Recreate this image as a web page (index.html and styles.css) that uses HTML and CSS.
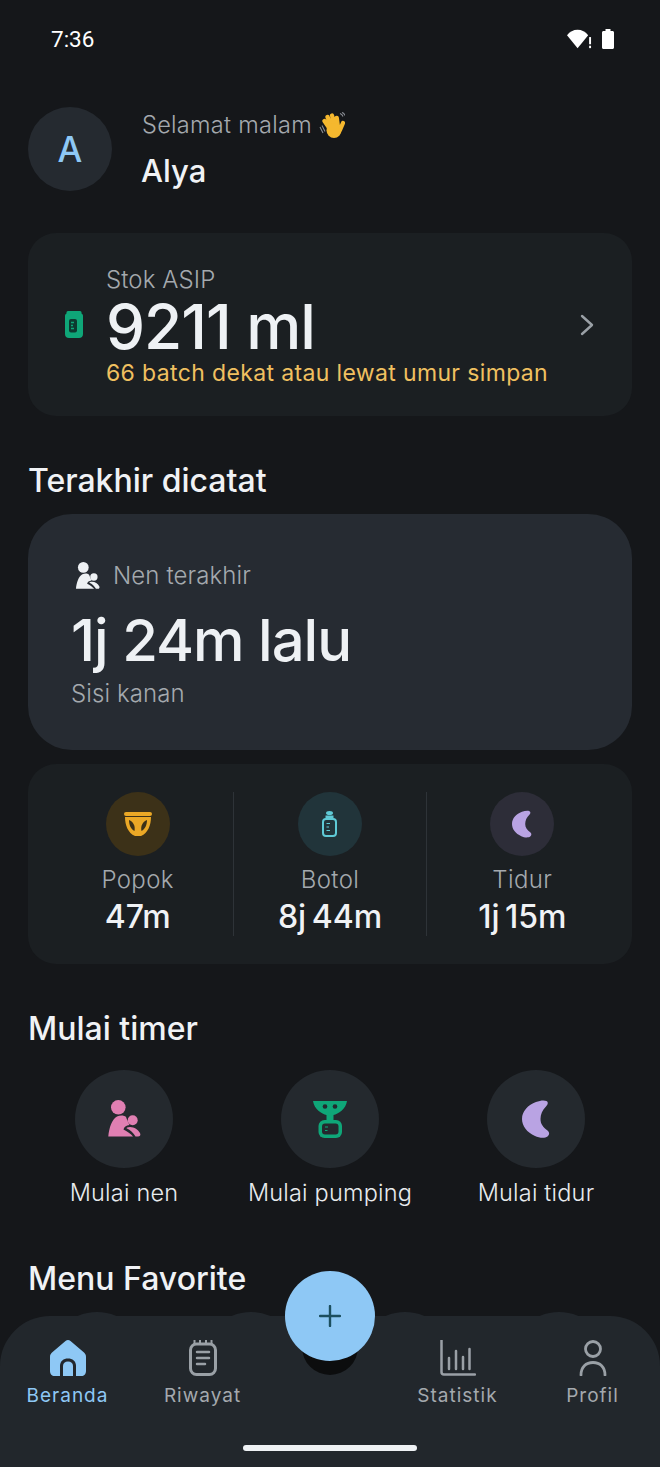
FILE: index.html
```html
<!DOCTYPE html>
<html lang="id">
<head>
<meta charset="utf-8">
<title>Beranda</title>
<link rel="stylesheet" href="styles.css">
</head>
<body>
<svg class="defs" width="0" height="0" aria-hidden="true">
  <symbol id="i-nurse" viewBox="0 0 34 38">
    <circle cx="11.300" cy="7.300" r="7.300"/><circle cx="25.700" cy="20.300" r="5"/>
    <path d="M1.300 36.500C2 28 5 19 10 16.500C13 15 17 15 19 17C20 19.500 21 22 22.500 25C19 25.500 17 27 16.500 29.500C20 31 24 34 26 36.500Z"/>
    <path d="M20 27.500C25 25.500 31 29 33 33C34 35 33 36.500 31 36.500H28.500C26.500 33 23.500 30 19.500 28.300Z"/>
  </symbol>
  <symbol id="i-moon" viewBox="0 0 28 38">
    <path d="M14 2C18 .5 22 0 24.500 1C26.500 2 26 4.500 24 6.500C20.500 10 18.500 14 18.500 19C18.500 24 21 27 25.500 30.500C27.800 32.500 27.500 35 25.500 36.500C23 38.500 17 38 13 36C5 32.500 0 26 0 19C0 11 6 5 14 2Z"/>
  </symbol>
</svg>
<div class="screen">
  <div class="status">
    <span class="time">7:36</span>
    <div class="status-icons">
      <svg class="wifi" viewBox="0 0 26 20"><path d="M11 19.500L0 6C3 2.500 6.500.5 11 .5S19 2.500 22 6Z"/><rect x="23" y="8" width="2" height="7.500"/><rect x="23" y="17" width="2" height="2.500"/></svg>
      <svg class="battery" viewBox="0 0 12 20"><path d="M3.500 0H8.500V2H10.500C11.300 2 12 2.700 12 3.500V18.500C12 19.300 11.300 20 10.500 20H1.500C.7 20 0 19.300 0 18.500V3.500C0 2.700.7 2 1.500 2H3.500Z"/></svg>
    </div>
  </div>

  <header class="hello">
    <div class="avatar">A</div>
    <div class="hello-text">
      <div class="greeting">Selamat malam
        <svg class="wave" viewBox="0 0 26 26"><path fill="none" stroke="#8b8f96" stroke-width="1.100" d="M1 15L4 21M3 13.500L6 19.500M21 1.500C22.500 2 23.500 3 24 4.500M23 .5C24.500 1 25.500 2 26 3.500"/><g fill="none" stroke="#f5b82e" stroke-width="4.300" stroke-linecap="round"><path d="M11 17L5.500 9M13 15L8.500 5M16 14L13 3.500M19 15L17.800 6M21 18L24 11"/></g><circle cx="15" cy="18.500" r="7.500" fill="#f5b82e"/></svg>
      </div>
      <div class="name">Alya</div>
    </div>
  </header>

  <section class="stock card">
    <svg class="stock-icon" viewBox="0 0 18 27"><path fill="#0fa678" d="M3 0H15C16 0 16.500 .8 16.500 1.500V2.500C17.500 3 18 4 18 5V23C18 25.500 16.500 27 14 27H4C1.500 27 0 25.500 0 23V5C0 4 .5 3 1.500 2.500V1.500C1.500 .8 2 0 3 0Z"/><rect x="4" y="8" width="8" height="13.500" rx="2" fill="#0d3a30"/><path stroke="#0fa678" stroke-width="1.300" d="M6 11.500H9M6 14.500H8M6 17.500H9"/></svg>
    <div class="stock-text">
      <div class="label">Stok ASIP</div>
      <div class="big big-stock">9211 ml</div>
      <div class="warn">66 batch dekat atau lewat umur simpan</div>
    </div>
    <svg class="chevron" viewBox="0 0 14 22"><path d="M2 2L12 11L2 20" fill="none" stroke="#9aa0a6" stroke-width="2.400" stroke-linecap="round" stroke-linejoin="round"/></svg>
  </section>

  <h2 class="title title-last">Terakhir dicatat</h2>

  <section class="last">
    <div class="last-head">
      <svg class="last-icon"><use href="#i-nurse"/></svg>
      <span class="label">Nen terakhir</span>
    </div>
    <div class="big">1j 24m lalu</div>
    <div class="label side">Sisi kanan</div>
  </section>

  <section class="trio card">
    <div class="trio-col">
      <div class="trio-dot dot-amber">
        <svg class="popok" viewBox="0 0 28 24"><rect x="0" y="0" width="28" height="4" rx="2" fill="#eba826"/><path fill="#eba826" fill-rule="evenodd" d="M1 5H27C27 13 24 21 17 24H11C4 21 1 13 1 5ZM5 8C5 13 7 17 10.500 19C11.500 14 9.500 10 5 8ZM23 8C18.500 10 16.500 14 17.500 19C21 17 23 13 23 8Z"/></svg>
      </div>
      <div class="label">Popok</div>
      <div class="value">47m</div>
    </div>
    <div class="trio-col">
      <div class="trio-dot dot-teal">
        <svg class="bottle" viewBox="0 0 15 26"><ellipse cx="7.500" cy="2" rx="3.500" ry="2" fill="#5fcad6"/><rect x="3.500" y="4.500" width="8" height="3" fill="#5fcad6"/><rect x="1" y="8" width="13" height="17" rx="3" fill="none" stroke="#5fcad6" stroke-width="2"/><path stroke="#5fcad6" stroke-width="1.200" d="M4.500 12.500H8M4.500 16H7M4.500 19.500H8"/></svg>
      </div>
      <div class="label">Botol</div>
      <div class="value">8j 44m</div>
    </div>
    <div class="trio-col">
      <div class="trio-dot dot-violet">
        <svg class="moon-s"><use href="#i-moon"/></svg>
      </div>
      <div class="label">Tidur</div>
      <div class="value">1j 15m</div>
    </div>
  </section>

  <h2 class="title title-timer">Mulai timer</h2>

  <section class="timers">
    <div class="timer">
      <div class="timer-dot"><svg class="nurse-l"><use href="#i-nurse"/></svg></div>
      <span>Mulai nen</span>
    </div>
    <div class="timer">
      <div class="timer-dot">
        <svg class="pump" viewBox="0 0 34 38"><path fill="#0fa678" d="M0 1H34C33 9 25 14 20.500 15V20H13.500V15C9 14 1 9 0 1Z"/><circle cx="12" cy="6.500" r="2.300" fill="#24292e"/><circle cx="22" cy="6.500" r="2.300" fill="#24292e"/><rect x="5.500" y="20" width="23.500" height="18" rx="6" fill="#0fa678"/><rect x="9" y="23.500" width="16.500" height="11" rx="3" fill="#24292e"/><path stroke="#0fa678" stroke-width="1" d="M12 27H15M12 30.500H14.500"/></svg>
      </div>
      <span>Mulai pumping</span>
    </div>
    <div class="timer">
      <div class="timer-dot"><svg class="moon-l"><use href="#i-moon"/></svg></div>
      <span>Mulai tidur</span>
    </div>
  </section>

  <h2 class="title title-fav">Menu Favorite</h2>
  <section class="favs">
    <div class="fav"></div><div class="fav"></div><div class="fav"></div><div class="fav"></div>
  </section>

  <nav class="nav">
    <a class="tab tab-on">
      <svg class="tab-icon" viewBox="0 0 36 36"><path fill="#8ec8f5" d="M15.500 1L2 12.500C.7 13.700 0 15 0 17V31C0 34 2 36 4.500 36H31.500C34 36 36 34 36 31V17C36 15 35.300 13.700 34 12.500L20.500 1C19 -.3 17 -.3 15.500 1Z"/><path fill="#22272c" d="M10 36V26C10 21 13.500 18.500 18 18.500S26 21 26 26V36Z"/><path fill="#8ec8f5" d="M13 36V26C13 23 15 21.500 18 21.500S23 23 23 26V36Z"/></svg>
      <span>Beranda</span>
    </a>
    <a class="tab">
      <svg class="tab-icon" viewBox="0 0 36 36"><rect x="5.500" y="4" width="25" height="30.500" rx="6" fill="none" stroke="#9aa0a6" stroke-width="3"/><path stroke="#9aa0a6" stroke-width="2" d="M9.500 0V4M15 0V4M21 0V4M26.500 0V4"/><path stroke="#9aa0a6" stroke-width="2.500" stroke-linecap="round" fill="none" d="M12 12H24M12 18H24M12 24H20"/></svg>
      <span>Riwayat</span>
    </a>
    <div class="tab-gap"></div>
    <a class="tab">
      <svg class="tab-icon" viewBox="0 0 36 36"><path d="M1.500 0V32C1.500 33.500 2.500 34.500 4 34.500H35" fill="none" stroke="#9aa0a6" stroke-width="2.500" stroke-linecap="round"/><path stroke="#9aa0a6" stroke-width="2.500" stroke-linecap="round" d="M9 18V29M16 11V29M23 17V29M29.500 9V29"/></svg>
      <span>Statistik</span>
    </a>
    <a class="tab">
      <svg class="tab-icon" viewBox="0 0 36 36"><circle cx="18" cy="9" r="7.500" fill="none" stroke="#9aa0a6" stroke-width="2.800"/><path d="M6 35C6 27 11 22.500 18 22.500S30 27 30 35" fill="none" stroke="#9aa0a6" stroke-width="2.800" stroke-linecap="round"/></svg>
      <span>Profil</span>
    </a>
    <div class="gesture"></div>
  </nav>

  <button class="fab" type="button" aria-label="Tambah">
    <svg class="fab-plus" viewBox="0 0 22 22"><path d="M11 1V21M1 11H21" stroke="#1c4f5f" stroke-width="2.400" stroke-linecap="round"/></svg>
  </button>
</div>
</body>
</html>
```

FILE: styles.css
```css
* { box-sizing: border-box; }
html, body { margin: 0; padding: 0; }
body { background: #15171a; font-family: "Inter", "Noto Sans", sans-serif; color: #f0f2f5; }
.defs { position: absolute; }
.screen { position: relative; width: 660px; height: 1467px; overflow: hidden; padding: 0 28px; background: #15171a; }

.status { display: flex; justify-content: space-between; align-items: center; height: 78px; padding: 0 18px 0 23px; }
.time { font-family: "Roboto", sans-serif; font-size: 22.5px; color: #fff; }
.status-icons { display: flex; gap: 10px; align-items: center; }
.wifi { width: 25px; height: 20px; fill: #fff; }
.battery { width: 12px; height: 20px; fill: #fff; }

.hello { display: flex; align-items: flex-start; gap: 30px; margin-top: 29px; }
.avatar { width: 84px; height: 84px; border-radius: 50%; background: #252a30; color: #8ec8f5; font-size: 35px; font-weight: 500; display: flex; align-items: center; justify-content: center; }
.hello-text { padding-top: 2px; }
.greeting { font-size: 23.5px; line-height: 32px; font-weight: 300; color: #a4a9ae; display: flex; align-items: center; gap: 7px; letter-spacing: .3px; }
.wave { width: 26px; height: 26px; }
.name { font-size: 31px; font-weight: 500; line-height: 40px; margin-top: 10px; margin-left: -1px; }

.card { background: #1b1f22; border-radius: 28px; }
.stock { display: flex; align-items: center; height: 183px; margin-top: 42px; padding: 0 36px 0 37px; }
.stock-icon { width: 18px; height: 27px; flex: none; }
.stock-text { margin-left: 23px; flex: 1; padding-top: 2px; }
.label { font-size: 24px; line-height: 32px; font-weight: 300; color: #a4a9ae; letter-spacing: .1px; }
.big { font-size: 58px; line-height: 64px; font-weight: 500; color: #eef1f4; letter-spacing: -1px; }
.big-stock { font-size: 62px; line-height: 62px; }
.warn { font-size: 23px; line-height: 30px; font-weight: 400; color: #f0c060; letter-spacing: .36px; }
.chevron { width: 14px; height: 22px; flex: none; margin-right: 2px; }

.title { margin: 0; font-size: 32px; line-height: 40px; font-weight: 500; color: #f0f2f5; }
.title-last { margin-top: 45px; }
.title-timer { margin-top: 45px; }
.title-fav { margin-top: 50px; }

.last { height: 236px; margin-top: 13px; background: #262b32; border-radius: 44px; padding: 46px 43px 0; }
.last-head { display: flex; align-items: center; gap: 13px; margin-left: 4px; }
.last-icon { width: 25px; height: 28px; fill: #eef1f4; }
.last .big { margin-top: 16px; }
.side { margin-top: 6px; }

.trio { display: flex; height: 200px; margin-top: 14px; padding: 28px 14px; }
.trio-col { flex: 1; display: flex; flex-direction: column; align-items: center; border-left: 1px solid #2e3338; }
.trio-col:first-child { border-left: 0; }
.trio-dot { flex: none; width: 64px; height: 64px; border-radius: 50%; display: flex; align-items: center; justify-content: center; margin-bottom: 8px; }
.trio .label { letter-spacing: .4px; }
.dot-amber { background: #3c3118; }
.dot-teal { background: #21343a; }
.dot-violet { background: #2d2d38; }
.popok { width: 28px; height: 24px; }
.bottle { width: 15px; height: 26px; }
.moon-s { width: 20px; height: 28px; fill: #b9a3e3; }
.value { font-size: 32px; line-height: 40px; font-weight: 500; color: #f0f2f5; word-spacing: -3px; margin-top: 1px; }

.timers { display: grid; grid-template-columns: repeat(3, 206px); justify-content: center; margin-top: 21px; }
.timer { display: flex; flex-direction: column; align-items: center; gap: 9px; font-size: 23.5px; line-height: 32px; font-weight: 300; letter-spacing: .2px; color: #e8ebee; }
.timer-dot { width: 98px; height: 98px; border-radius: 50%; background: #24292e; display: flex; align-items: center; justify-content: center; }
.nurse-l { width: 34px; height: 38px; fill: #e07fb2; }
.pump { width: 34px; height: 38px; }
.moon-l { width: 28px; height: 38px; fill: #b9a3e3; }

.favs { display: grid; grid-template-columns: repeat(4, 154px); margin-top: 13px; margin-left: -8px; }
.fav { width: 98px; height: 98px; border-radius: 50%; background: #22272c; justify-self: center; }

.nav { position: absolute; left: 0; right: 0; bottom: 0; height: 151px; background: #22272c; border-radius: 50px 50px 0 0; display: flex; padding: 24px 0 0; }
.tab { width: 135px; display: flex; flex-direction: column; align-items: center; gap: 7px; font-size: 19px; line-height: 26px; letter-spacing: 1px; color: #a4a9ae; }
.tab-on { color: #8ec8f5; }
.tab-gap { flex: 1; }
.tab-icon { width: 36px; height: 36px; }
.gesture { position: absolute; left: 243px; bottom: 16px; width: 174px; height: 6px; border-radius: 3px; background: #eef1f4; }

.fab { position: absolute; left: 285px; top: 1271px; width: 90px; height: 90px; border: 0; border-radius: 50%; background: #8ec8f5; padding: 0; display: flex; align-items: center; justify-content: center; box-shadow: 0 31px 0 -17px #0c0d0e; }
.fab-plus { width: 22px; height: 22px; }
```
